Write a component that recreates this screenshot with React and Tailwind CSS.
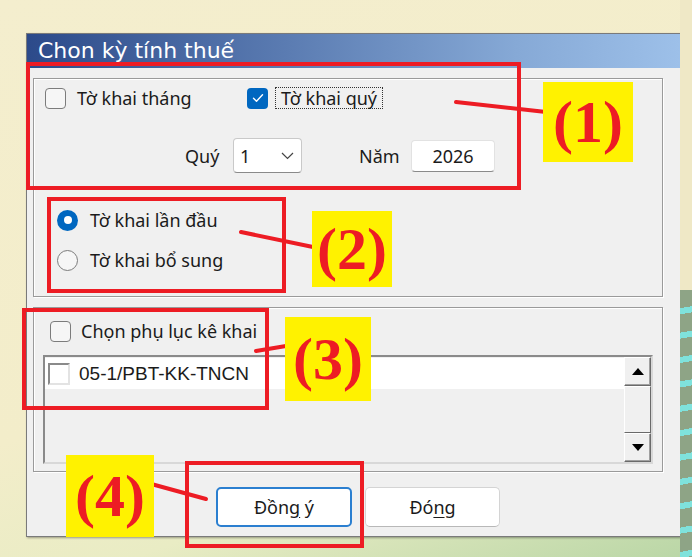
import React from "react";

function Check({ checked }) {
  if (checked) {
    return (
      <span className="flex h-[21px] w-[21px] shrink-0 items-center justify-center rounded-[4px] bg-[#0067c0]">
        <svg width="12" height="10" viewBox="0 0 12 10" fill="none">
          <path d="M1.5 5.2 L4.5 8.2 L10.5 1.8" stroke="white" strokeWidth="1.4" strokeLinecap="round" strokeLinejoin="round" />
        </svg>
      </span>
    );
  }
  return <span className="h-[21px] w-[21px] shrink-0 rounded-[4px] border-[1.5px] border-[#7c7c7c] bg-[#f6f6f6]" />;
}

function Radio({ checked }) {
  if (checked) {
    return (
      <span className="flex h-[21px] w-[21px] shrink-0 items-center justify-center rounded-full bg-[#0067c0]">
        <span className="h-[8px] w-[8px] rounded-full bg-white" />
      </span>
    );
  }
  return <span className="h-[21px] w-[21px] shrink-0 rounded-full border-[1.5px] border-[#7c7c7c] bg-[#f6f6f6]" />;
}

function Group({ className, children }) {
  return (
    <div className={"border border-[#9a9a9a] shadow-[inset_1px_1px_0_#ffffff,1px_1px_0_#ffffff] " + className}>
      {children}
    </div>
  );
}

function ScrollBtn({ up }) {
  return (
    <div className="flex h-[29px] w-[27px] items-center justify-center border border-t-white border-l-white border-b-[#6a6a6a] border-r-[#6a6a6a] bg-[#f0f0f0] shadow-[inset_-1px_-1px_0_#a0a0a0]">
      <svg width="12" height="7" viewBox="0 0 12 7">
        {up ? <path d="M6 0 L12 7 L0 7 Z" fill="black" /> : <path d="M0 0 L12 0 L6 7 Z" fill="black" />}
      </svg>
    </div>
  );
}

export default function App() {
  return (
    <div className="relative h-[557px] w-[692px] overflow-hidden bg-[linear-gradient(160deg,#f4eece_0%,#f3edca_55%,#e9ecc4_75%,#b9d6a6_100%)] font-['Noto_Sans',sans-serif] text-[18px] leading-[24px] text-[#1b1b1b]">
      {/* decorative background strip at the right */}
      <div className="absolute right-0 top-[290px] h-[267px] w-[12px] bg-[repeating-linear-gradient(170deg,#8ea486_0px,#8ea486_18px,#7fe2dc_18px,#7fe2dc_24px)]" />
      <div className="absolute right-0 top-0 h-[290px] w-[12px] bg-[#efe8c6]" />

      <div className="pl-[26px] pt-[33px]">
        <div className="flex h-[504px] w-[655px] flex-col border border-[#7a7a7a] bg-[#f0f0f0] shadow-[1px_1px_2px_rgba(0,0,0,0.35)]">
          <div className="flex h-[34px] items-center bg-[linear-gradient(90deg,#2c4a8a_0%,#5b7cb2_40%,#86a9d6_75%,#9dc0e9_100%)] pl-[11px] font-['DejaVu_Sans',sans-serif] text-[22px] leading-none text-white">
            Chon kỳ tính thuế
          </div>
          <div className="flex flex-1 flex-col pl-[6px] pr-[17px] pt-[10px]">
            {/* Group 1 */}
            <Group className="flex h-[219px] flex-col">
              <div className="flex items-center pl-[11px] pt-[7px]">
                <div className="flex w-[202px] items-center gap-[11px]">
                  <Check />
                  <span>Tờ khai tháng</span>
                </div>
                <div className="flex items-center gap-[7px]">
                  <Check checked />
                  <span className="border border-dotted border-[#333] px-[5px] leading-[20px]">Tờ khai quý</span>
                </div>
              </div>
              <div className="mt-[28px] flex items-center pl-[151px]">
                <span className="w-[36px]">Quý</span>
                <div className="ml-[12px] flex h-[35px] w-[69px] items-center justify-between rounded-[4px] border border-[#c9c9c9] border-b-[#8a8a8a] bg-white pl-[6px] pr-[7px]">
                  <span>1</span>
                  <svg width="13" height="8" viewBox="0 0 13 8" fill="none">
                    <path d="M1 1 L6.5 6.5 L12 1" stroke="#444" strokeWidth="1.2" />
                  </svg>
                </div>
                <span className="ml-[57px] w-[41px]">Năm</span>
                <div className="ml-[11px] flex h-[32px] w-[84px] items-center justify-center rounded-[4px] border border-[#e2e2e2] border-b-[#8a8a8a] bg-white">
                  2026
                </div>
              </div>
              <div className="mt-[35px] flex flex-col gap-[16px] pl-[23px]">
                <div className="flex items-center gap-[12px]">
                  <Radio checked />
                  <span>Tờ khai lần đầu</span>
                </div>
                <div className="flex items-center gap-[12px]">
                  <Radio />
                  <span>Tờ khai bổ sung</span>
                </div>
              </div>
            </Group>

            {/* Group 2 */}
            <Group className="mt-[10px] flex h-[165px] flex-col">
              <div className="flex items-center gap-[10px] pl-[16px] pt-[11px]">
                <Check />
                <span>Chọn phụ lục kê khai</span>
              </div>
              <div className="mx-[9px] mt-[12px] flex h-[109px] border-2 border-b-[#d8d8d8] border-l-[#8a8a8a] border-r-[#d8d8d8] border-t-[#8a8a8a] bg-[#f0f0f0]">
                <div className="flex-1 pt-[1px]">
                  <div className="flex h-[31px] items-center gap-[9px] bg-white pl-[3px]">
                    <span className="h-[22px] w-[22px] border-2 border-b-[#e3e3e3] border-l-[#8a8a8a] border-r-[#e3e3e3] border-t-[#8a8a8a] bg-white" />
                    <span className="font-['Liberation_Sans',sans-serif] text-[19px]">05-1/PBT-KK-TNCN</span>
                  </div>
                </div>
                <div className="flex w-[27px] flex-col">
                  <ScrollBtn up />
                  <div className="flex-1 border border-t-white border-l-white border-b-[#6a6a6a] border-r-[#6a6a6a] bg-[#f0f0f0]" />
                  <ScrollBtn />
                </div>
              </div>
            </Group>

            {/* Buttons */}
            <div className="mt-[15px] flex gap-[13px] pl-[183px]">
              <button className="flex h-[40px] w-[136px] items-center justify-center rounded-[5px] border-2 border-[#2b7fd0] bg-white">
                <span>
                  Đồn<span className="underline underline-offset-[3px]">g</span> ý
                </span>
              </button>
              <button className="flex h-[40px] w-[135px] items-center justify-center rounded-[5px] border border-[#d4d4d4] border-b-[#b8b8b8] bg-white">
                <span>
                  Đó<span className="underline underline-offset-[3px]">n</span>g
                </span>
              </button>
            </div>
          </div>
        </div>
      </div>

      {/* Annotation overlay */}
      <svg className="pointer-events-none absolute left-0 top-0" width="692" height="557" viewBox="0 0 692 557">
        <g fill="none" stroke="#ed1c24" strokeWidth="4">
          <rect x="28" y="64" width="491" height="124" />
          <rect x="49" y="199" width="235" height="92" />
          <rect x="24" y="310" width="243" height="98" />
          <rect x="187" y="463" width="175" height="83" />
        </g>
        <g stroke="#ed1c24" strokeWidth="4" strokeLinecap="round">
          <line x1="456" y1="102" x2="546" y2="112" />
          <line x1="241" y1="232" x2="313" y2="247" />
          <line x1="256" y1="351" x2="292" y2="345" />
          <line x1="144" y1="482" x2="206" y2="499" />
        </g>
      </svg>
      <div className="absolute left-[543px] top-[82px] flex h-[80px] w-[90px] items-center justify-center bg-[#fff200] font-['Liberation_Serif',serif] text-[60px] font-bold leading-none text-[#ed1c24]">
        (1)
      </div>
      <div className="absolute left-[312px] top-[211px] flex h-[76px] w-[80px] items-center justify-center bg-[#fff200] font-['Liberation_Serif',serif] text-[60px] font-bold leading-none text-[#ed1c24]">
        (2)
      </div>
      <div className="absolute left-[285px] top-[317px] flex h-[84px] w-[86px] items-center justify-center bg-[#fff200] font-['Liberation_Serif',serif] text-[60px] font-bold leading-none text-[#ed1c24]">
        (3)
      </div>
      <div className="absolute left-[66px] top-[455px] flex h-[82px] w-[88px] items-center justify-center bg-[#fff200] font-['Liberation_Serif',serif] text-[60px] font-bold leading-none text-[#ed1c24]">
        (4)
      </div>
    </div>
  );
}
